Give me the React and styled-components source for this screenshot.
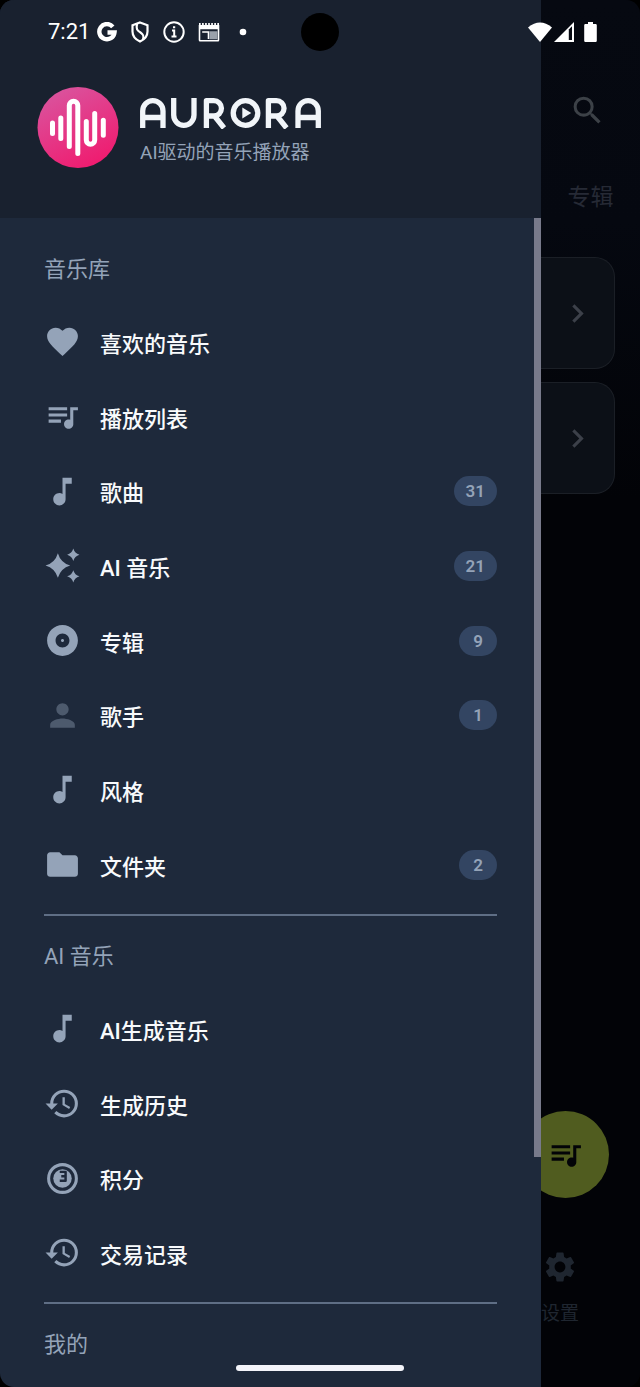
import React from 'react';
import styled, { createGlobalStyle } from 'styled-components';
import {
  MdAlbum,
  MdChevronRight,
  MdFavorite,
  MdFolder,
  MdMusicNote,
  MdPerson,
  MdQueueMusic,
  MdSearch,
  MdSettings,
} from 'react-icons/md';

const GlobalStyle = createGlobalStyle`
  html, body, #root {
    height: 100%;
  }

  body {
    margin: 0;
    background: #000;
    font-family: Roboto, 'Noto Sans CJK SC', sans-serif;
  }

  * {
    box-sizing: border-box;
  }
`;

const Screen = styled.div`
  position: relative;
  display: grid;
  grid-template-columns: 541fr 99fr;
  height: 100%;
  overflow: hidden;
  border-radius: 14px;
  background: #020307;
`;

/* System bar, drawn over the drawer and the page behind it */
const StatusBar = styled.div`
  position: absolute;
  z-index: 3;
  top: 0;
  left: 0;
  right: 0;
  height: 64px;
  display: grid;
  grid-template-columns: 1fr 38px 1fr;
  align-items: center;
  padding: 0 42px;
  color: #fff;
`;

const StatusLeft = styled.div`
  display: flex;
  align-items: center;
  gap: 13px;
  padding-left: 6px;
`;

const Clock = styled.time`
  font-size: 22px;
  line-height: 24px;
  margin-right: -6px;
`;

const Camera = styled.div`
  width: 38px;
  height: 38px;
  border-radius: 50%;
  background: #000;
`;

const StatusRight = styled.div`
  display: flex;
  justify-content: flex-end;
  align-items: center;
`;

/* Sits above the dimmed page, the page's round button slides under it */
const Drawer = styled.aside`
  position: relative;
  z-index: 2;
  min-width: 0;
  min-height: 0;
  display: flex;
  flex-direction: column;
  background: #1e293b;
`;

const DrawerHeader = styled.header`
  flex: none;
  height: 218px;
  display: flex;
  align-items: flex-start;
  gap: 21px;
  padding: 87px 37px 0;
  background: #19212f;
`;

const Brand = styled.div`
  display: flex;
  flex-direction: column;
  gap: 10px;
  padding-top: 10px;
`;

const Tagline = styled.p`
  margin: 0;
  font-size: 19px;
  line-height: 28px;
  color: #94a3b8;
`;

const DrawerBody = styled.div`
  flex: 1;
  min-height: 0;
  display: flex;
  overflow: hidden;
`;

const Menu = styled.nav`
  flex: 1;
  min-width: 0;
  padding: 12px 37px 0 44px;
`;

const ScrollThumb = styled.div`
  flex: none;
  width: 7px;
  height: 939px;
  background: #787a8b;
`;

const Section = styled.section`
  & + & {
    border-top: 2px solid #5f6e85;
    margin-top: 12px;
  }
`;

const SectionTitle = styled.h2`
  margin: 0;
  height: ${(p) => (p.$first ? '74px' : '75px')};
  display: flex;
  align-items: center;
  font-size: 22px;
  font-weight: 400;
  color: #94a3b8;
`;

const List = styled.ul`
  list-style: none;
  margin: 0;
  padding: 0;
`;

const Row = styled.li`
  height: 75px;

  &:nth-child(3n) {
    height: 74px;
  }
`;

const Item = styled.button`
  width: 100%;
  height: 100%;
  display: flex;
  align-items: center;
  gap: 19px;
  padding: 0;
  border: none;
  background: none;
  color: #f8fafc;
  font: 500 22px Roboto, 'Noto Sans CJK SC', sans-serif;
  text-align: left;
  cursor: pointer;
`;

const ItemIcon = styled.span`
  display: flex;
  width: 37px;
  font-size: 37px;
  color: #94a3b8;
  opacity: ${(p) => (p.$faded ? 0.4 : 1)};
`;

const ItemLabel = styled.span`
  flex: 1;
`;

const Badge = styled.span`
  min-width: 38px;
  padding: 0 12px;
  border-radius: 15px;
  background: #334562;
  color: #94a3b8;
  font-size: 17px;
  font-weight: 600;
  line-height: 30px;
  text-align: center;
`;

const Page = styled.main`
  min-width: 0;
  display: flex;
  flex-direction: column;
  background: linear-gradient(#060911, #050810 16%, #020307 36%, #020307);
`;

const IconButton = styled.button`
  display: flex;
  align-self: center;
  margin: 92px 7px 0 0;
  padding: 0;
  border: none;
  background: none;
  color: #3c4147;
  font-size: 37px;
`;

const Tab = styled.a`
  align-self: center;
  margin: 53px 0 43px;
  color: #262a35;
  font-size: 23px;
  line-height: 32px;
  text-decoration: none;
`;

const Card = styled.button`
  height: 112px;
  margin: 0 25px 13px 0;
  display: flex;
  align-items: center;
  justify-content: flex-end;
  padding: 0 18px 0 0;
  border: 1px solid #1b1f26;
  border-left: none;
  border-radius: 0 20px 20px 0;
  background: #0c1017;
  color: #3c4049;
  font-size: 37px;
`;

const Fab = styled.button`
  flex: none;
  align-self: flex-end;
  width: 87px;
  height: 87px;
  margin: auto 31px 51px 0;
  display: flex;
  align-items: center;
  justify-content: center;
  padding: 0;
  border: none;
  border-radius: 50%;
  background: #505c1f;
  color: #020307;
  font-size: 37px;
`;

const SettingsTab = styled.a`
  display: flex;
  flex-direction: column;
  align-items: center;
  width: 38px;
  gap: 16px;
  padding-bottom: 60px;
  color: #1f2630;
  font-size: 19px;
  line-height: 26px;
  text-decoration: none;
  white-space: nowrap;

  svg {
    font-size: 36px;
  }
`;

const HomeIndicator = styled.div`
  position: absolute;
  z-index: 3;
  bottom: 16px;
  left: 50%;
  width: 168px;
  height: 6px;
  margin-left: -84px;
  border-radius: 3px;
  background: #f4f4fa;
`;

const LogoMark = () => (
  <svg width="82" height="82" viewBox="0 0 82 82" fill="none" stroke="#fff" strokeWidth="5" strokeLinecap="round" strokeLinejoin="round">
    <defs>
      <linearGradient id="mark" x1="0.2" y1="0" x2="0.7" y2="1">
        <stop offset="0" stopColor="#d9559f" />
        <stop offset="1" stopColor="#f01a6e" />
      </linearGradient>
    </defs>
    <circle cx="41" cy="40.5" r="40.5" fill="url(#mark)" stroke="none" />
    <path d="M15.5 36v10.500M23.800 31v20.500M32.300 59.500V18.500a4.250 4.250 0 0 1 8.500 0V66.500M49.300 34.500v18.500a4.200 4.200 0 0 0 8.400 0V26.500M66.300 33.200v15" />
  </svg>
);

const Wordmark = () => (
  <svg width="182" height="32" viewBox="0 0 182 32" role="img" aria-label="AURORA" fill="none" stroke="#f1f5f9" strokeWidth="5.3" strokeLinejoin="round">
    <path d="M2.700 31V14a10.150 10.300 0 0 1 20.300 0V31M2.700 20.500h20.300" />
    <path d="M33.700 1v17a10.150 10.300 0 0 0 20.300 0V1" />
    <path d="M66.400 31V3.700h7.400a7.600 7.600 0 0 1 0 15.300h-7.400M74.500 19l9.500 12" />
    <circle cx="105.500" cy="16" r="12.300" />
    <path d="M102.300 10.500l9 5.500-9 5.500z" fill="#f1f5f9" stroke="none" />
    <path d="M128.400 31V3.700h8a7.600 7.600 0 0 1 0 15.300h-8M137 19l9.500 12" />
    <path d="M158 31V14a10.150 10.300 0 0 1 20.300 0V31M158 20.500h20.300" />
  </svg>
);

const SparkleIcon = () => (
  <svg width="1em" height="1em" viewBox="0 0 24 24" fill="currentColor">
    <path d="M9 4Q10.800 10.200 17 12Q10.800 13.800 9 20Q7.200 13.800 1 12Q7.200 10.200 9 4ZM19 1Q19.900 4.100 23 5Q19.900 5.900 19 9Q18.100 5.900 15 5Q18.100 4.100 19 1ZM19 15Q19.900 18.100 23 19Q19.900 19.900 19 23Q18.100 19.900 15 19Q18.100 18.100 19 15Z" />
  </svg>
);

const HistoryIcon = () => (
  <svg width="1em" height="1em" viewBox="0 0 24 24" fill="currentColor">
    <path d="M13.500 8H12v5l4.280 2.540.72-1.210-3.500-2.080V8M13 3a9 9 0 0 0-9 9H1l3.960 4.030L9 12H6a7 7 0 0 1 7-7 7 7 0 0 1 7 7 7 7 0 0 1-7 7c-1.930 0-3.680-.79-4.940-2.060l-1.420 1.420A8.896 8.896 0 0 0 13 21a9 9 0 0 0 9-9 9 9 0 0 0-9-9" />
  </svg>
);

const PointsIcon = () => (
  <svg width="1em" height="1em" viewBox="0 0 24 24" fill="currentColor">
    <circle cx="12" cy="12" r="9" fill="none" stroke="currentColor" strokeWidth="2" />
    <circle cx="12" cy="12" r="6" />
    <path d="M10.200 7.700h3.800v5.700h-3.800M11.200 10.550h2.800" fill="none" stroke="#1e293b" strokeWidth="1.600" strokeLinejoin="round" />
  </svg>
);

const GoogleIcon = () => (
  <svg width="20" height="20" viewBox="0 0 20 20" fill="none" stroke="#fff" strokeWidth="4.400">
    <path d="M15.800 4.800A7.600 7.600 0 1 0 17.500 10.500H10.500" />
  </svg>
);

const ShieldIcon = () => (
  <svg width="20" height="22" viewBox="0 0 20 22" fill="none" stroke="#fff" strokeWidth="2.200">
    <path d="M10 1.500l7.500 2.700v6.300c0 4.500-3 8-7.500 10-4.500-2-7.500-5.500-7.500-10V4.200zM7 3c-1 5 0 6.500 3.500 8.500 3 2 3.500 3.500 2.500 7" />
  </svg>
);

const InfoIcon = () => (
  <svg width="22" height="22" viewBox="0 0 22 22" fill="none" stroke="#fff" strokeWidth="2">
    <circle cx="11" cy="11" r="9.700" />
    <path d="M9 9.500h2.200v6M8.500 15.500h5M10 6.200h2.200" />
  </svg>
);

const NewsIcon = () => (
  <svg width="22" height="20" viewBox="0 0 22 20" fill="none" stroke="#fff" strokeWidth="1.600">
    <path d="M1.500 3v15a.8.8 0 0 0 .8.800h17.400a.8.800 0 0 0 .8-.8V3" />
    <path d="M1 2h20" strokeWidth="2" strokeDasharray="1.700 1.350" />
    <path d="M1 3h20v4.200H1z" fill="#fff" stroke="none" />
    <path d="M4.200 10h6.300v7" />
    <path d="M11.500 9.200h8v8h-8z" fill="#9aa1ab" stroke="none" />
  </svg>
);

const SignalIcons = () => (
  <svg width="70" height="22" viewBox="0 0 70 22" fill="#fff">
    <path d="M0 6.500Q12 -3.500 24 6.500L12 21z" />
    <path d="M46 1v20H26z" />
    <path d="M40.800 8.500l3.200-3.200V19h-3.200z" fill="#080b13" />
    <path d="M60 1h5v2h2.500a1.300 1.300 0 0 1 1.300 1.300V19.700a1.300 1.300 0 0 1-1.300 1.300h-10a1.300 1.300 0 0 1-1.300-1.300V4.300A1.300 1.300 0 0 1 57.500 3H60z" />
  </svg>
);

const MoreDot = () => (
  <svg width="20" height="8" viewBox="0 0 20 8">
    <circle cx="10" cy="4" r="3.300" fill="#fff" />
  </svg>
);

const sections = [
  {
    title: '音乐库',
    items: [
      { label: '喜欢的音乐', icon: MdFavorite },
      { label: '播放列表', icon: MdQueueMusic },
      { label: '歌曲', icon: MdMusicNote, count: 31 },
      { label: 'AI 音乐', icon: SparkleIcon, count: 21 },
      { label: '专辑', icon: MdAlbum, count: 9 },
      { label: '歌手', icon: MdPerson, count: 1, faded: true },
      { label: '风格', icon: MdMusicNote },
      { label: '文件夹', icon: MdFolder, count: 2 },
    ],
  },
  {
    title: 'AI 音乐',
    items: [
      { label: 'AI生成音乐', icon: MdMusicNote },
      { label: '生成历史', icon: HistoryIcon },
      { label: '积分', icon: PointsIcon },
      { label: '交易记录', icon: HistoryIcon },
    ],
  },
  { title: '我的', items: [] },
];

const MenuItem = ({ label, icon: Icon, count, faded }) => (
  <Row>
    <Item type="button">
      <ItemIcon $faded={faded}>
        <Icon />
      </ItemIcon>
      <ItemLabel>{label}</ItemLabel>
      {count && <Badge>{count}</Badge>}
    </Item>
  </Row>
);

export default function App() {
  return (
    <>
      <GlobalStyle />
      <Screen>
        <StatusBar>
          <StatusLeft>
            <Clock>7:21</Clock>
            <GoogleIcon />
            <ShieldIcon />
            <InfoIcon />
            <NewsIcon />
            <MoreDot />
          </StatusLeft>
          <Camera />
          <StatusRight>
            <SignalIcons />
          </StatusRight>
        </StatusBar>
        <Drawer>
          <DrawerHeader>
            <LogoMark />
            <Brand>
              <Wordmark />
              <Tagline>AI驱动的音乐播放器</Tagline>
            </Brand>
          </DrawerHeader>
          <DrawerBody>
            <Menu>
              {sections.map((section, i) => (
                <Section key={section.title}>
                  <SectionTitle $first={i === 0}>{section.title}</SectionTitle>
                  <List>
                    {section.items.map((item) => (
                      <MenuItem key={item.label} {...item} />
                    ))}
                  </List>
                </Section>
              ))}
            </Menu>
            <ScrollThumb />
          </DrawerBody>
        </Drawer>
        <Page>
          <IconButton type="button" aria-label="搜索">
            <MdSearch />
          </IconButton>
          <Tab href="#albums">专辑</Tab>
          <Card type="button" aria-label="打开">
            <MdChevronRight />
          </Card>
          <Card type="button" aria-label="打开">
            <MdChevronRight />
          </Card>
          <Fab type="button" aria-label="播放队列">
            <MdQueueMusic />
          </Fab>
          <SettingsTab href="#settings">
            <MdSettings />
            设置
          </SettingsTab>
        </Page>
        <HomeIndicator />
      </Screen>
    </>
  );
}
